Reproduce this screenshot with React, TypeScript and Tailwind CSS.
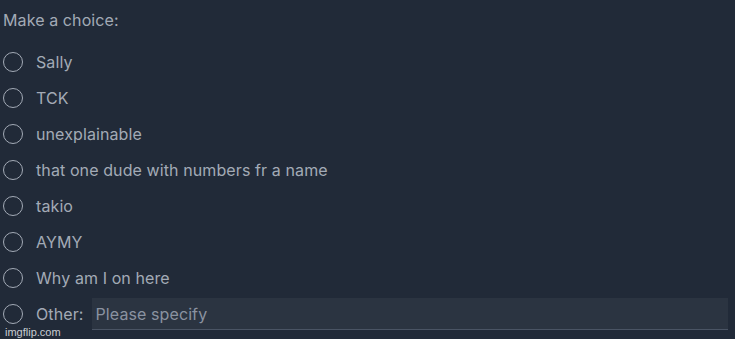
import React from "react";

const options = [
  "Sally",
  "TCK",
  "unexplainable",
  "that one dude with numbers fr a name",
  "takio",
  "AYMY",
  "Why am I on here",
];

function Radio() {
  return <span className="inline-block w-[20px] h-[20px] rounded-full border-[1.5px] border-[#a3aab6] shrink-0" />;
}

export default function App() {
  return (
    <div
      className="relative w-[735px] h-[339px] bg-[#212a38] text-[#a3aab6] overflow-hidden"
      style={{ fontFamily: "Inter, 'Noto Sans', sans-serif" }}
    >
      <div className="pl-[3px] pt-[9px] text-[16px] leading-[22px] tracking-[0.1px]">Make a choice:</div>
      <div className="flex flex-col pt-[20px] gap-[14px]">
        {options.map((o) => (
          <div key={o} className="flex items-center h-[22px] pl-[3px]">
            <Radio />
            <span className="ml-[13px] text-[16px] tracking-[0.1px]">{o}</span>
          </div>
        ))}
        <div className="flex items-center h-[22px] pl-[3px]">
          <Radio />
          <span className="ml-[13px] text-[16px] tracking-[0.1px]">Other:</span>
          <div className="ml-[8px] w-[636px] h-[32px] shrink-0 bg-[#2b3441] border-b border-[#4a5464] flex items-center px-[4px] text-[16px] tracking-[0.1px] text-[#8a92a0]">
            Please specify
          </div>
        </div>
      </div>
      <div
        className="absolute left-[5px] bottom-[0px] text-[11px] leading-[13px] text-[#c8ccd2]"
        style={{ fontFamily: "'Liberation Sans', sans-serif" }}
      >
        imgflip.com
      </div>
    </div>
  );
}
